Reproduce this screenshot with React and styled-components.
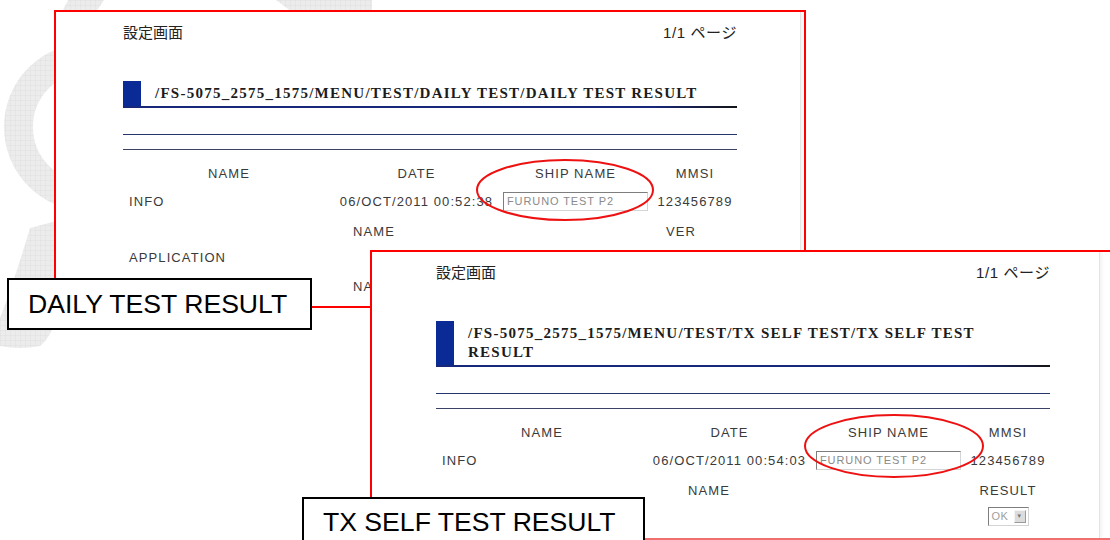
import React from 'react';
import styled, { createGlobalStyle } from 'styled-components';

const GlobalStyle = createGlobalStyle`
  html, body {
    margin: 0;
    padding: 0;
    background: #fff;
  }
  body {
    font-family: "Liberation Sans", Arial, sans-serif;
  }
`;

const Canvas = styled.div`
  position: relative;
  width: 1110px;
  height: 540px;
  overflow: hidden;
  background: #fff;
`;

const Layer = styled.svg`
  position: absolute;
  left: 0;
  top: 0;
  z-index: ${(p) => p.$z};
  pointer-events: none;
`;

const Panel = styled.section`
  position: absolute;
  left: ${(p) => p.$left}px;
  top: ${(p) => p.$top}px;
  width: ${(p) => p.$width}px;
  height: ${(p) => p.$height}px;
  box-sizing: border-box;
  border: 2px solid #ff0000;
  border-bottom-color: ${(p) => p.$bottomColor || '#ff0000'};
  background: #fff;
  overflow: hidden;
  z-index: ${(p) => p.$z};
`;

const Sheet = styled.div`
  box-sizing: border-box;
  width: ${(p) => p.$width}px;
  height: 100%;
  padding: 10px 0 0 ${(p) => p.$padLeft}px;
  border-right: 1px solid #e4e4e4;
  box-shadow: 2px 0 3px #f2f2f2;
`;

const Content = styled.div`
  width: 614px;
`;

const TopRow = styled.div`
  display: flex;
  justify-content: space-between;
  align-items: center;
  height: 18px;
  font-family: "Liberation Sans", "Noto Sans CJK JP", sans-serif;
  font-size: 15px;
  color: #222;
`;

const PageNo = styled.span`
  letter-spacing: 0.6px;
`;

const TitleBar = styled.div`
  display: flex;
  margin-top: 41px;
  border-bottom: 2px solid #17277a;
  border-image: linear-gradient(90deg, #17277a 0%, #17277a 86%, #151515 100%) 1;
`;

const Marker = styled.div`
  flex: none;
  width: 18px;
  background: #0a2b95;
`;

const TitleText = styled.div`
  padding: 3px 0 3px 14px;
  font-family: "Liberation Serif", "Times New Roman", serif;
  font-weight: bold;
  font-size: 15px;
  line-height: 19px;
  letter-spacing: 1.25px;
  color: #1c1c1c;
  white-space: pre-line;
`;

const Rule = styled.div`
  height: 1px;
  margin-top: ${(p) => p.$mt}px;
  background: ${(p) => p.$color};
`;

const Row = styled.div`
  display: grid;
  grid-template-columns: ${(p) => p.$cols};
  align-items: center;
  height: 22px;
  margin-top: ${(p) => p.$mt}px;
  font-family: "Liberation Sans", Arial, sans-serif;
  font-size: 13px;
  letter-spacing: 1.1px;
  color: #3a3a3a;
`;

const Cell = styled.div`
  display: flex;
  justify-content: ${(p) => (p.$left ? 'flex-start' : 'center')};
  padding-left: ${(p) => (p.$left ? '6px' : '0')};
  white-space: nowrap;
`;

const TextBox = styled.div`
  box-sizing: border-box;
  width: 145px;
  height: 19px;
  padding: 0 3px;
  border: 1px solid;
  border-color: #7e7e7e #d4d4d4 #d4d4d4 #7e7e7e;
  font-size: 11px;
  line-height: 17px;
  letter-spacing: 0.9px;
  color: #8a8a8a;
`;

const Select = styled.div`
  box-sizing: border-box;
  display: flex;
  align-items: center;
  justify-content: space-between;
  width: 41px;
  height: 19px;
  padding: 0 2px 0 3px;
  border: 1px solid;
  border-color: #7e7e7e #d4d4d4 #d4d4d4 #7e7e7e;
  font-size: 11px;
  letter-spacing: 0.5px;
  color: #a0a0a0;
`;

const SelectButton = styled.span`
  box-sizing: border-box;
  display: flex;
  align-items: center;
  justify-content: center;
  width: 12px;
  height: 13px;
  background: #dcdcdc;
  border: 1px solid;
  border-color: #f4f4f4 #9a9a9a #9a9a9a #f4f4f4;
  font-size: 6px;
  color: #777;
`;

const Callout = styled.div`
  position: absolute;
  left: ${(p) => p.$left}px;
  top: ${(p) => p.$top}px;
  width: ${(p) => p.$width}px;
  height: ${(p) => p.$height}px;
  box-sizing: border-box;
  display: flex;
  align-items: center;
  padding-left: 19px;
  border: 2px solid #000;
  background: #fff;
  font-family: "Liberation Sans", Arial, sans-serif;
  font-size: 26.6px;
  color: #000;
  white-space: nowrap;
  z-index: 5;
`;

const INFO_COLS = '212px 163px 155px 84px';

const InfoTable = ({ date }) => (
  <>
    <Row $cols={INFO_COLS} $mt={12}>
      <Cell>NAME</Cell>
      <Cell>DATE</Cell>
      <Cell>SHIP NAME</Cell>
      <Cell>MMSI</Cell>
    </Row>
    <Row $cols={INFO_COLS} $mt={6}>
      <Cell $left>INFO</Cell>
      <Cell>{date}</Cell>
      <Cell>
        <TextBox>FURUNO TEST P2</TextBox>
      </Cell>
      <Cell>123456789</Cell>
    </Row>
  </>
);

const Page = ({ sheetWidth, padLeft, title, children }) => (
  <Sheet $width={sheetWidth} $padLeft={padLeft}>
    <Content>
      <TopRow>
        <span>設定画面</span>
        <PageNo>1/1 ページ</PageNo>
      </TopRow>
      <TitleBar>
        <Marker />
        <TitleText>{title}</TitleText>
      </TitleBar>
      <Rule $mt={26} $color="#26346c" />
      <Rule $mt={14} $color="#3a4266" />
      {children}
    </Content>
  </Sheet>
);

const Watermark = () => (
  <Layer width="1110" height="540" $z={0}>
    <defs>
      <pattern id="wm-grid" width="5" height="5" patternUnits="userSpaceOnUse">
        <rect width="5" height="5" fill="#ececec" />
        <path d="M5 0H0V5" fill="none" stroke="#dcdcdc" strokeWidth="0.8" />
      </pattern>
    </defs>
    <circle cx="88" cy="127" r="69.5" fill="none" stroke="url(#wm-grid)" strokeWidth="29" />
    <path
      d="M30 228 L60 220 L60 300 Q54 336 40 346 Q20 350 0 346 L0 318 Q14 282 30 228 Z"
      fill="url(#wm-grid)"
    />
    <path d="M68 0 L104 0 L96 12 L62 12 Z" fill="url(#wm-grid)" />
    <path d="M276 0 L372 0 L372 12 L292 12 Z" fill="url(#wm-grid)" />
  </Layer>
);

const Rings = () => (
  <Layer width="1110" height="540" $z={3}>
    <ellipse cx="565" cy="190" rx="88" ry="30" fill="none" stroke="#ee1111" strokeWidth="2" />
    <ellipse cx="894" cy="446" rx="89" ry="31" fill="none" stroke="#ee1111" strokeWidth="2" />
  </Layer>
);

const App = () => (
  <>
    <GlobalStyle />
    <Canvas>
      <Watermark />

      <Panel $left={54} $top={10} $width={752} $height={298} $z={1}>
        <Page
          sheetWidth={745}
          padLeft={67}
          title="/FS-5075_2575_1575/MENU/TEST/DAILY TEST/DAILY TEST RESULT"
        >
          <InfoTable date="06/OCT/2011 00:52:38" />
          <Row $cols="180px 142px 180px 112px" $mt={8}>
            <Cell />
            <Cell>NAME</Cell>
            <Cell />
            <Cell>VER</Cell>
          </Row>
          <Row $cols="180px 142px 180px 112px" $mt={4}>
            <Cell $left>APPLICATION</Cell>
          </Row>
          <Row $cols="180px 142px 180px 112px" $mt={7}>
            <Cell />
            <Cell>NAME</Cell>
          </Row>
        </Page>
      </Panel>

      <Panel $left={370} $top={250} $width={770} $height={290} $bottomColor="#f07070" $z={2}>
        <Page
          sheetWidth={728}
          padLeft={64}
          title={'/FS-5075_2575_1575/MENU/TEST/TX SELF TEST/TX SELF TEST\nRESULT'}
        >
          <InfoTable date="06/OCT/2011 00:54:03" />
          <Row $cols="200px 146px 184px 84px" $mt={8}>
            <Cell />
            <Cell>NAME</Cell>
            <Cell />
            <Cell>RESULT</Cell>
          </Row>
          <Row $cols="200px 146px 184px 84px" $mt={4}>
            <Cell />
            <Cell />
            <Cell />
            <Cell>
              <Select>
                OK
                <SelectButton>▼</SelectButton>
              </Select>
            </Cell>
          </Row>
        </Page>
      </Panel>

      <Rings />

      <Callout $left={7} $top={278} $width={305} $height={52}>
        DAILY TEST RESULT
      </Callout>
      <Callout $left={302} $top={497} $width={343} $height={50}>
        TX SELF TEST RESULT
      </Callout>
    </Canvas>
  </>
);

export default App;
